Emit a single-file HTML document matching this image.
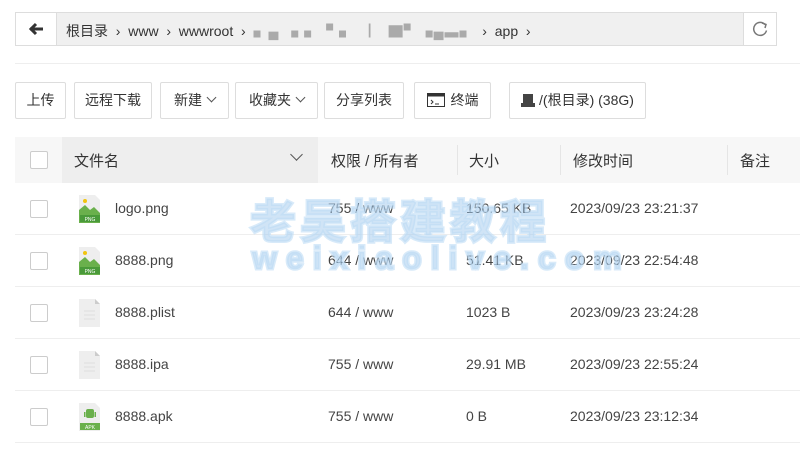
<!DOCTYPE html><html><head><meta charset="utf-8"><style>
*{box-sizing:border-box;margin:0;padding:0}
body{width:800px;height:461px;background:#fff;font-family:"Liberation Sans","Noto Sans CJK SC",sans-serif;color:#333;position:relative;overflow:hidden;font-size:14px}
.a{position:absolute}
.bc{left:15px;top:12px;width:762px;height:34px;border:1px solid #ddd;background:#f0f0f0}
.btn{position:absolute;top:82px;height:37px;border:1px solid #ddd;border-radius:2px;background:#fff;line-height:35px;text-align:center;font-size:14px;color:#333}
.hd{left:15px;top:137px;width:785px;height:46px;background:#f7f7f7}
.cb{position:absolute;width:18px;height:18px;border:1px solid #ccc;border-radius:2px;background:#fff}
.row{position:absolute;left:15px;width:785px;height:52px;border-bottom:1px solid #eee;font-size:14px;color:#444}
.row span{position:absolute;top:17px}
.chev{display:inline-block;width:7px;height:7px;border-right:1.3px solid #555;border-bottom:1.3px solid #555;transform:rotate(45deg);margin-left:6px;position:relative;top:-4px}
.hx{position:absolute;top:150px;font-size:15px}
</style></head><body>
<div class="a bc"></div>
<div class="a" style="left:16px;top:13px;width:41px;height:32px;background:#fff;border-right:1px solid #ddd"><svg width="41" height="32"><path d="M14 16h13M20 11l-5 5 5 5" stroke="#333" stroke-width="3" fill="none"/></svg></div>
<div class="a" style="left:743px;top:13px;width:33px;height:32px;background:#fff;border-left:1px solid #ddd"><svg width="33" height="32"><path d="M21 11.5a6.5 6.5 0 1 0 1.5 6" stroke="#777" stroke-width="1.5" fill="none"/><path d="M18 10l4 1.5-1 3.5" stroke="#777" stroke-width="1.5" fill="none"/></svg></div>
<div class="a" style="left:66px;top:21px;font-size:14px;color:#333;white-space:nowrap">根目录 &nbsp;›&nbsp; www &nbsp;›&nbsp; wwwroot &nbsp;›&nbsp; <span style="color:#aaa;letter-spacing:1px">▖▄ ▗ ▖▝ ▖ &nbsp; ▏ ▇▘▗▄▃▖</span> &nbsp;›&nbsp; app &nbsp;›</div>
<div class="a" style="left:15px;top:63px;width:785px;height:1px;background:#eee"></div>
<div class="btn" style="left:15px;width:51px">上传</div>
<div class="btn" style="left:74px;width:78px">远程下载</div>
<div class="btn" style="left:160px;width:69px">新建<i class="chev"></i></div>
<div class="btn" style="left:235px;width:83px">收藏夹<i class="chev"></i></div>
<div class="btn" style="left:324px;width:80px">分享列表</div>
<div class="btn" style="left:414px;width:77px"><svg width="18" height="14" style="vertical-align:-2px;margin-right:6px"><rect x="0.5" y="0.5" width="17" height="13" fill="none" stroke="#333"/><rect x="0.5" y="0.5" width="17" height="3" fill="#333"/><path d="M4 7l2 2-2 2M8 11h4" stroke="#333" fill="none"/></svg>终端</div>
<div class="btn" style="left:509px;width:137px"><svg width="14" height="14" style="vertical-align:-2px;margin-right:4px"><rect x="2" y="1" width="10" height="9" fill="#444"/><rect x="0" y="10" width="14" height="4" fill="#444"/></svg>/(根目录) (38G)</div>
<div class="a hd"></div>
<div class="a" style="left:62px;top:137px;width:256px;height:46px;background:#eee"></div>
<div class="cb" style="left:30px;top:151px"></div>
<div class="hx" style="left:74px">文件名</div>
<div class="a" style="left:292px;top:150px"><i class="chev" style="width:9px;height:9px;margin:0"></i></div>
<div class="hx" style="left:331px">权限 / 所有者</div>
<div class="a" style="left:457px;top:145px;width:1px;height:30px;background:#e5e5e5"></div>
<div class="hx" style="left:469px">大小</div>
<div class="a" style="left:560px;top:145px;width:1px;height:30px;background:#e5e5e5"></div>
<div class="hx" style="left:573px">修改时间</div>
<div class="a" style="left:727px;top:145px;width:1px;height:30px;background:#e5e5e5"></div>
<div class="hx" style="left:740px">备注</div>

<div class="row" style="top:183px"><div class="cb" style="left:15px;top:17px"></div>
<svg class="a" style="left:64px;top:12px" width="22" height="28"><path d="M0 0h16l5 5v23H0z" fill="#eee"/><path d="M0 28V15l6-5 5 5 4-3 6 6v10z" fill="#6ab04c"/><circle cx="6" cy="6" r="2" fill="#f1c40f"/><rect x="1" y="20" width="20" height="7" fill="#4a9a3a"/><text x="11" y="26" font-size="5" fill="#fff" text-anchor="middle">PNG</text></svg>
<span style="left:100px">logo.png</span><span style="left:313px">755 / www</span><span style="left:451px">150.65 KB</span><span style="left:555px">2023/09/23 23:21:37</span></div>
<div class="row" style="top:235px"><div class="cb" style="left:15px;top:17px"></div>
<svg class="a" style="left:64px;top:12px" width="22" height="28"><path d="M0 0h16l5 5v23H0z" fill="#eee"/><path d="M0 28V15l6-5 5 5 4-3 6 6v10z" fill="#6ab04c"/><circle cx="6" cy="6" r="2" fill="#f1c40f"/><rect x="1" y="20" width="20" height="7" fill="#4a9a3a"/><text x="11" y="26" font-size="5" fill="#fff" text-anchor="middle">PNG</text></svg>
<span style="left:100px">8888.png</span><span style="left:313px">644 / www</span><span style="left:451px">51.41 KB</span><span style="left:555px">2023/09/23 22:54:48</span></div>
<div class="row" style="top:287px"><div class="cb" style="left:15px;top:17px"></div>
<svg class="a" style="left:64px;top:12px" width="22" height="28"><path d="M0 0h16l5 5v23H0z" fill="#eee"/><path d="M16 0v5h5" fill="#ccc"/><path d="M5 12h11M5 16h11M5 20h11" stroke="#ddd"/></svg>
<span style="left:100px">8888.plist</span><span style="left:313px">644 / www</span><span style="left:451px">1023 B</span><span style="left:555px">2023/09/23 23:24:28</span></div>
<div class="row" style="top:339px"><div class="cb" style="left:15px;top:17px"></div>
<svg class="a" style="left:64px;top:12px" width="22" height="28"><path d="M0 0h16l5 5v23H0z" fill="#eee"/><path d="M16 0v5h5" fill="#ccc"/><path d="M5 12h11M5 16h11M5 20h11" stroke="#ddd"/></svg>
<span style="left:100px">8888.ipa</span><span style="left:313px">755 / www</span><span style="left:451px">29.91 MB</span><span style="left:555px">2023/09/23 22:55:24</span></div>
<div class="row" style="top:391px"><div class="cb" style="left:15px;top:17px"></div>
<svg class="a" style="left:64px;top:12px" width="22" height="28"><path d="M0 0h16l5 5v23H0z" fill="#eee"/><rect x="7" y="6" width="8" height="9" rx="2" fill="#6ab04c"/><rect x="5" y="9" width="1.5" height="5" fill="#6ab04c"/><rect x="15.5" y="9" width="1.5" height="5" fill="#6ab04c"/><rect x="1" y="20" width="20" height="7" fill="#6ab04c"/><text x="11" y="26" font-size="5" fill="#fff" text-anchor="middle">APK</text></svg>
<span style="left:100px">8888.apk</span><span style="left:313px">755 / www</span><span style="left:451px">0 B</span><span style="left:555px">2023/09/23 23:12:34</span></div>

<div class="a" style="left:250px;top:186px;font-size:46px;font-weight:bold;color:rgba(150,195,235,0.45);letter-spacing:4px;white-space:nowrap;-webkit-text-stroke:3px rgba(190,220,245,0.6)">老吴搭建教程</div>
<div class="a" style="left:252px;top:240px;font-size:32px;font-weight:bold;color:rgba(150,195,235,0.45);letter-spacing:9px;white-space:nowrap;-webkit-text-stroke:3px rgba(190,220,245,0.6)">weixiaolive.com</div>
</body></html>
